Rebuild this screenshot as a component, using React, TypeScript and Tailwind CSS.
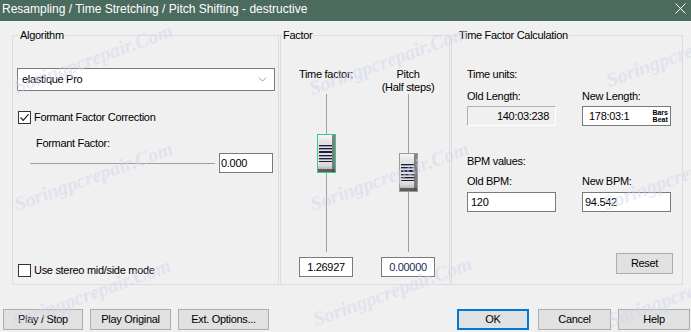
import { ChevronDown } from 'lucide-react';

const marks = [
    'left-[18px] top-[76px]',
    'left-[18px] top-[194px]',
    'left-[16px] top-[311px]',
    'left-[313px] top-[78px]',
    'left-[314px] top-[194px]',
    'left-[317px] top-[309px]',
    'left-[610px] top-[70px]',
    'left-[607px] top-[193px]',
    'left-[612px] top-[310px]',
];

const Check = ({ checked }: { checked?: boolean }) => (
    <span className="w-[13px] h-[13px] border border-[#333] bg-white flex items-center justify-center">
        {checked && (
            <svg width="11" height="11" viewBox="0 0 11 11">
                <path d="M1.5 5.5 L4.2 8.3 L9.6 2.2" fill="none" stroke="#222" strokeWidth="1.2" />
            </svg>
        )}
    </span>
);

const Thumb = ({ focus }: { focus?: boolean }) => (
    <svg width="19" height="39" viewBox="0 0 19 39">
        <defs>
            <linearGradient id={focus ? 'tg1' : 'tg2'} x1="0" y1="0" x2="0" y2="1">
                <stop offset="0" stopColor="#f8f8f8" />
                <stop offset="0.2" stopColor="#e2e2e2" />
                <stop offset="0.8" stopColor="#dedede" />
                <stop offset="1" stopColor="#9a9a9a" />
            </linearGradient>
        </defs>
        <rect x="0.5" y="0.5" width="18" height="38" fill={`url(#${focus ? 'tg1' : 'tg2'})`} stroke={focus ? '#3cc88a' : '#9a9a9a'} />
        <rect x="15" y="1" width="3" height="37" fill="#5c5c5c" opacity="0.75" />
        <rect x="1" y="35" width="17" height="3" fill="#4a4a4a" opacity="0.8" />
        {[11, 14, 17, 18, 21, 24, 27].map((y) => (
            <line key={y} x1="2" x2="15" y1={y + 0.5} y2={y + 0.5} stroke="#1d1d3a" strokeWidth="1" />
        ))}
        {[12, 15, 22, 25].map((y) => (
            <line key={y} x1="2" x2="15" y1={y + 0.5} y2={y + 0.5} stroke="#9a9aae" strokeWidth="1" />
        ))}
    </svg>
);

const Btn = ({ label, className }: { label: string; className: string }) => (
    <div className={`h-[21px] flex items-center justify-center bg-[#e1e1e1] ${className}`}>{label}</div>
);

export default function App() {
    return (
        <div className="relative w-[691px] h-[332px] overflow-hidden bg-[#f0f0f0] text-black text-[11px] tracking-[-0.3px] font-['Liberation_Sans',Arial,sans-serif]">
            {/* Title bar */}
            <div className="h-[21px] bg-[#4b6b5f] flex items-center justify-between pl-[2px] pr-[5px] text-white">
                <span className="text-[12px] tracking-normal leading-none -mt-[3px]">
                    Resampling / Time Stretching / Pitch Shifting - destructive
                </span>
                <svg width="11" height="11" viewBox="0 0 11 11" className="-mt-[4px]">
                    <path d="M0.5 0.5 L10.5 10.5 M10.5 0.5 L0.5 10.5" stroke="#fff" strokeWidth="1" />
                </svg>
            </div>

            {/* Groups */}
            <div className="flex mt-[14px] pl-[12px]">
                {/* Algorithm */}
                <div className="w-[267px] h-[250px] border border-[#dcdcdc] flex flex-col">
                    <span className="-mt-[7px] ml-[6px] px-[1px] w-fit leading-[13px] bg-[#f0f0f0]">Algorithm</span>
                    <div className="mt-[26px] ml-[4px] mr-[3px] h-[23px] border border-[#7a7a7a] bg-white flex items-center justify-between pl-[4px] pr-[5px]">
                        <span>elastique Pro</span>
                        <ChevronDown size={13} strokeWidth={1} color="#444" />
                    </div>
                    <div className="mt-[20px] ml-[5px] h-[13px] flex items-center gap-[3px]">
                        <Check checked />
                        <span>Formant Factor Correction</span>
                    </div>
                    <span className="mt-[13px] ml-[23px] leading-[13px]">Formant Factor:</span>
                    <div className="mt-[3px] h-[20px] flex items-center">
                        <div className="ml-[17px] w-[185px] h-px bg-[#a0a0a0]" />
                        <div className="ml-[4px] w-[54px] h-[20px] border border-[#7a7a7a] bg-white flex items-center pl-[1px]">0.000</div>
                    </div>
                    <div className="mt-auto mb-[7px] ml-[5px] h-[13px] flex items-center gap-[3px]">
                        <Check />
                        <span>Use stereo mid/side mode</span>
                    </div>
                </div>

                {/* Factor */}
                <div className="ml-[1px] w-[170px] h-[250px] border border-[#dcdcdc] flex flex-col">
                    <span className="-mt-[7px] ml-[1px] px-[1px] w-fit leading-[13px] bg-[#f0f0f0]">Factor</span>
                    <div className="mt-[26px] pl-[4px] flex">
                        <div className="w-[82px] flex flex-col items-center">
                            <div className="h-[26px] leading-[13px] text-center">Time factor:</div>
                            <div className="relative w-px h-[158px] bg-[#a0a0a0]">
                                <div className="absolute -left-[9px] top-[40px]">
                                    <Thumb focus />
                                </div>
                            </div>
                            <div className="mt-[5px] w-[54px] h-[20px] border border-[#7a7a7a] bg-white flex items-center justify-center">1.26927</div>
                        </div>
                        <div className="w-[82px] flex flex-col items-center">
                            <div className="h-[26px] leading-[13px] text-center">
                                Pitch
                                <br />
                                (Half steps)
                            </div>
                            <div className="relative w-px h-[158px] bg-[#a0a0a0]">
                                <div className="absolute -left-[9px] top-[59px]">
                                    <Thumb />
                                </div>
                            </div>
                            <div className="mt-[5px] w-[54px] h-[20px] border border-[#7a7a7a] bg-white flex items-center justify-center text-[#1a2a5a]">0.00000</div>
                        </div>
                    </div>
                </div>

                {/* Time Factor Calculation */}
                <div className="ml-[1px] w-[232px] h-[250px] border border-[#dcdcdc] flex flex-col">
                    <span className="-mt-[7px] ml-[6px] px-[1px] w-fit leading-[13px] bg-[#f0f0f0]">Time Factor Calculation</span>
                    <div className="pl-[15px] flex flex-col">
                        <span className="mt-[26px] leading-[13px]">Time units:</span>
                        <div className="mt-[9px] grid grid-cols-[89px_89px] gap-x-[26px] leading-[13px]">
                            <span>Old Length:</span>
                            <span>New Length:</span>
                        </div>
                        <div className="mt-[3px] grid grid-cols-[89px_89px] gap-x-[26px]">
                            <div className="h-[20px] border border-t-[#b0b0b0] border-l-[#b0b0b0] border-r-white border-b-white flex items-center justify-end pr-[6px]">140:03:238</div>
                            <div className="h-[20px] border border-[#7a7a7a] bg-white flex items-center justify-between pl-[6px] pr-[2px]">
                                <span>178:03:1</span>
                                <span className="text-[7px] leading-[7px] tracking-normal font-bold text-center">
                                    Bars
                                    <br />
                                    Beat
                                </span>
                            </div>
                        </div>
                        <span className="mt-[29px] leading-[13px]">BPM values:</span>
                        <div className="mt-[7px] grid grid-cols-[89px_89px] gap-x-[26px] leading-[13px]">
                            <span>Old BPM:</span>
                            <span>New BPM:</span>
                        </div>
                        <div className="mt-[4px] grid grid-cols-[89px_89px] gap-x-[26px]">
                            <div className="h-[20px] border border-[#7a7a7a] bg-white flex items-center pl-[3px]">120</div>
                            <div className="h-[20px] border border-[#7a7a7a] bg-white flex items-center pl-[2px]">94.542</div>
                        </div>
                    </div>
                    <Btn label="Reset" className="mt-auto mb-[10px] self-end mr-[9px] w-[57px] border border-[#adadad]" />
                </div>
            </div>

            {/* Buttons */}
            <div className="flex mt-[24px] pl-[3px] pr-[1px]">
                <Btn label="Play / Stop" className="w-[80px] border border-[#adadad]" />
                <Btn label="Play Original" className="ml-[7px] w-[81px] border border-[#adadad]" />
                <Btn label="Ext. Options..." className="ml-[7px] w-[91px] border border-[#adadad]" />
                <Btn label="OK" className="ml-auto w-[72px] border-2 border-[#0078d7]" />
                <Btn label="Cancel" className="ml-[9px] w-[73px] border border-[#adadad]" />
                <Btn label="Help" className="ml-[7px] w-[72px] border border-[#adadad]" />
            </div>

            {/* Watermark */}
            {marks.map((m) => (
                <span
                    key={m}
                    className={`absolute ${m} pointer-events-none whitespace-nowrap origin-bottom-left -rotate-[20deg] text-[20px] leading-[20px] tracking-normal italic font-bold font-['Liberation_Serif',serif] text-[#d2d7ee] opacity-50`}
                >
                    Soringpcrepair.Com
                </span>
            ))}
        </div>
    );
}
